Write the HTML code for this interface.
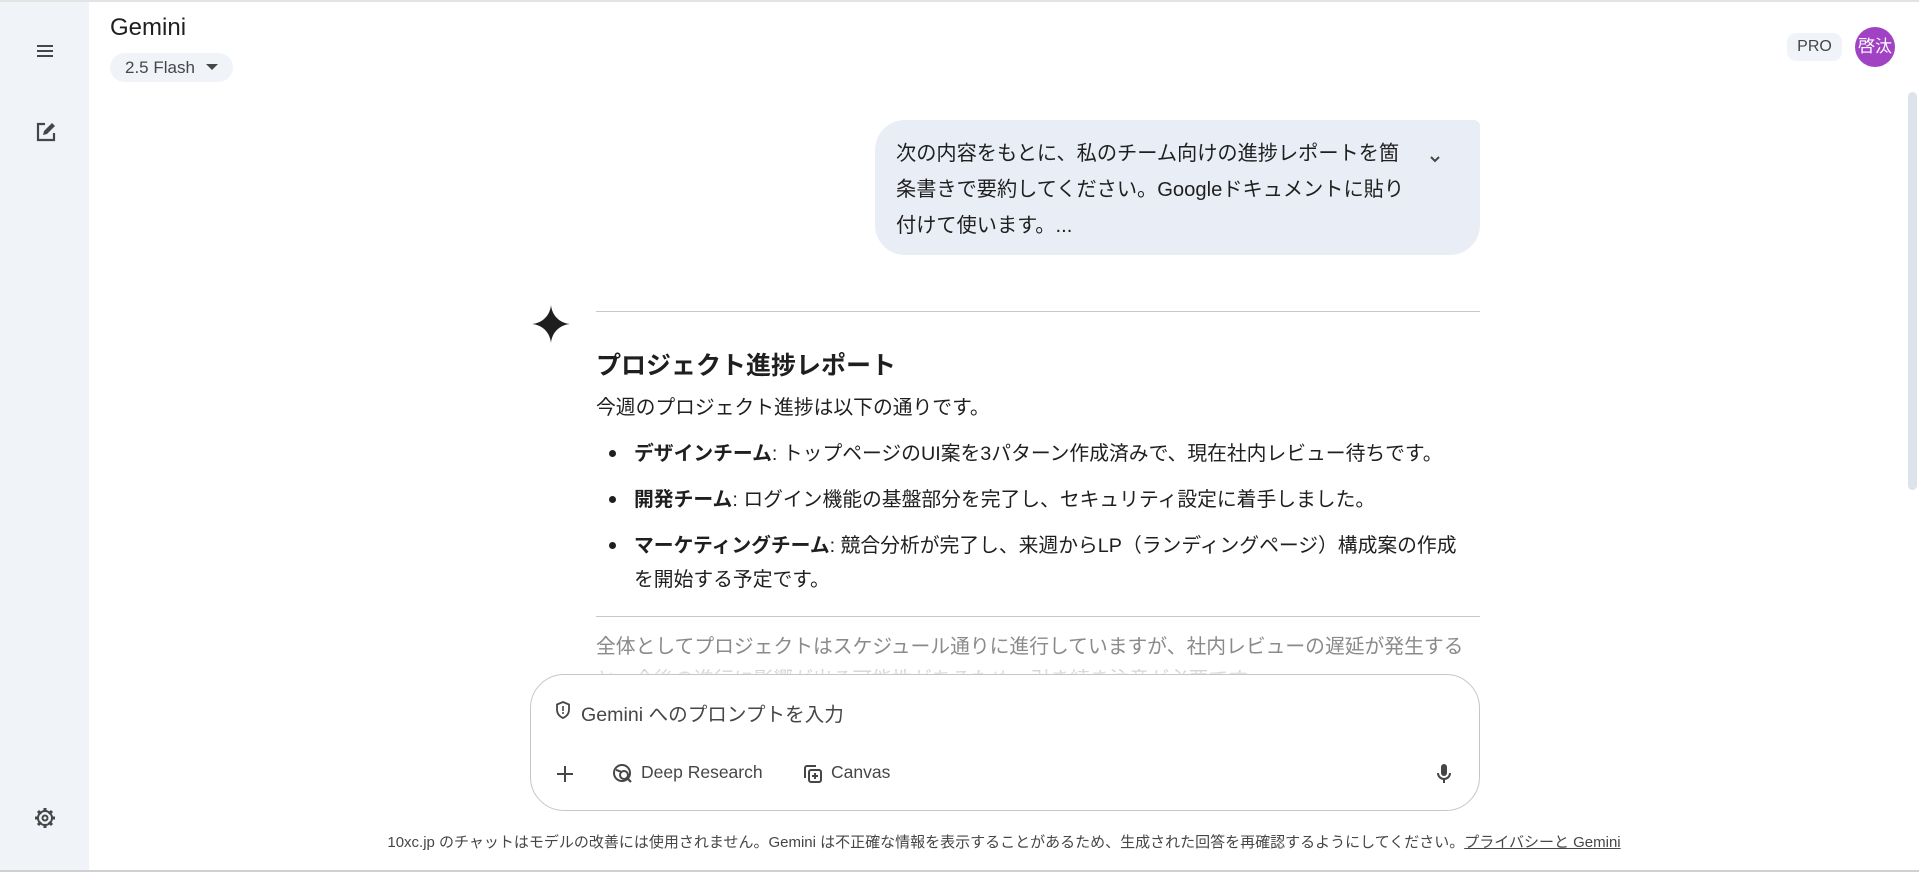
<!DOCTYPE html>
<html><head><meta charset="utf-8">
<style>
*{margin:0;padding:0;box-sizing:border-box}
html,body{width:1919px;height:872px;overflow:hidden;background:#fff;font-family:"Liberation Sans","Noto Sans CJK JP",sans-serif;color:#1f1f1f}
.a{position:absolute}
.side{left:0;top:0;width:89px;height:872px;background:#f0f4f9}
.topline{left:0;top:0;width:1919px;height:2px;background:#e3e3e3}
.botline{left:0;top:870px;width:1919px;height:2px;background:#d0d0d0}
.bubble{left:875px;top:120px;width:605px;height:135px;background:#e9eef6;border-radius:30px 6px 30px 30px}
.bt{left:896px;font-size:20.2px;line-height:36px;white-space:nowrap}
.hr{height:1px;background:#c8c8c8}
.body{font-size:19.8px;white-space:nowrap}
.li{left:634px}
.dot{left:609px;width:7px;height:7px;border-radius:50%;background:#1f1f1f}
.input{left:530px;top:674px;width:950px;height:137px;border:1px solid #c4c7c5;border-radius:34px;background:#fff}
.tool{font-size:17.5px;color:#444746;white-space:nowrap}
</style></head><body>
<div class="a side"></div>
<div class="a topline"></div>
<svg class="a" style="left:35px;top:42px" width="20" height="18" viewBox="0 0 20 18"><rect x="2" y="3" width="16" height="2" fill="#444746"/><rect x="2" y="8" width="16" height="2" fill="#444746"/><rect x="2" y="13" width="16" height="2" fill="#444746"/></svg>
<svg class="a" style="left:34px;top:120px" width="24" height="24" viewBox="0 0 24 24"><path d="M11 4H4v16h16v-7" fill="none" stroke="#444746" stroke-width="2.2"/><path d="M9 15l1-4 8-8 3 3-8 8z" fill="#444746"/></svg>
<svg class="a" style="left:33px;top:806px" width="24" height="24" viewBox="0 0 24 24"><circle cx="12" cy="12" r="7" fill="none" stroke="#444746" stroke-width="2"/><circle cx="12" cy="12" r="2.5" fill="none" stroke="#444746" stroke-width="2"/><g stroke="#444746" stroke-width="3"><path d="M12 2v4M12 18v4M2 12h4M18 12h4M5 5l3 3M16 16l3 3M5 19l3-3M16 8l3-3"/></g></svg>

<div class="a" style="left:110px;top:14px;font-size:24px">Gemini</div>
<div class="a" style="left:110px;top:53px;width:123px;height:29px;border-radius:15px;background:#f0f4f9;font-size:17px;color:#444746;padding:5px 0 0 15px">2.5 Flash <span style="display:inline-block;width:0;height:0;border-left:6px solid transparent;border-right:6px solid transparent;border-top:6px solid #444746;margin-left:6px;vertical-align:3px"></span></div>

<div class="a" style="left:1787px;top:33px;width:55px;height:28px;border-radius:9px;background:#f0f4f9;font-size:16px;color:#444746;text-align:center;line-height:28px">PRO</div>
<div class="a" style="left:1855px;top:27px;width:40px;height:40px;border-radius:50%;background:#a142c4;color:#fff;font-size:17px;text-align:center;line-height:40px">啓汰</div>
<div class="a" style="left:1908px;top:92px;width:9px;height:398px;border-radius:5px;background:#dde3ea"></div>

<div class="a bubble"></div>
<div class="a bt" style="top:136px">次の内容をもとに、私のチーム向けの進捗レポートを箇</div>
<div class="a bt" style="top:172px">条書きで要約してください。Googleドキュメントに貼り</div>
<div class="a bt" style="top:208px">付けて使います。...</div>
<svg class="a" style="left:1427px;top:151px" width="16" height="16" viewBox="0 0 16 16"><path d="M4 6l4 4 4-4" fill="none" stroke="#444746" stroke-width="2"/></svg>

<svg class="a" style="left:532px;top:305px" width="38" height="38" viewBox="0 0 40 40"><path d="M20 0C21 11 29 19 40 20C29 21 21 29 20 40C19 29 11 21 0 20C11 19 19 11 20 0Z" fill="#1f1f1f"/></svg>
<div class="a hr" style="left:596px;top:311px;width:884px"></div>
<div class="a" style="left:596px;top:346px;font-size:25px;font-weight:bold;white-space:nowrap">プロジェクト進捗レポート</div>
<div class="a body" style="left:596px;top:391px">今週のプロジェクト進捗は以下の通りです。</div>
<div class="a dot" style="top:450px"></div>
<div class="a body li" style="top:437px"><b>デザインチーム</b>: トップページのUI案を3パターン作成済みで、現在社内レビュー待ちです。</div>
<div class="a dot" style="top:496px"></div>
<div class="a body li" style="top:483px"><b>開発チーム</b>: ログイン機能の基盤部分を完了し、セキュリティ設定に着手しました。</div>
<div class="a dot" style="top:542px"></div>
<div class="a body li" style="top:529px"><b>マーケティングチーム</b>: 競合分析が完了し、来週からLP（ランディングページ）構成案の作成</div>
<div class="a body li" style="top:563px">を開始する予定です。</div>
<div class="a hr" style="left:596px;top:616px;width:884px"></div>
<div class="a body" style="left:596px;top:630px;color:#8a8a8a">全体としてプロジェクトはスケジュール通りに進行していますが、社内レビューの遅延が発生する</div>
<div class="a body" style="left:596px;top:663px;color:#c8c8c8">と、今後の進行に影響が出る可能性があるため、引き続き注意が必要です。</div>
<div class="a" style="left:89px;top:668px;width:1811px;height:12px;background:linear-gradient(rgba(255,255,255,0),#fff)"></div>
<div class="a" style="left:89px;top:680px;width:1818px;height:190px;background:#fff"></div>

<div class="a input"></div>
<svg class="a" style="left:554px;top:700px" width="18" height="20" viewBox="0 0 18 20"><path d="M9 2l6 2.5v5c0 4-2.6 7-6 8.5C5.6 16.5 3 13.5 3 9.5v-5z" fill="none" stroke="#444746" stroke-width="1.8"/><rect x="8.2" y="6" width="1.6" height="5" fill="#444746"/><circle cx="9" cy="13" r="1" fill="#444746"/></svg>
<div class="a" style="left:581px;top:698px;font-size:19.6px;color:#444746;white-space:nowrap">Gemini へのプロンプトを入力</div>
<svg class="a" style="left:555px;top:764px" width="20" height="20" viewBox="0 0 20 20"><path d="M10 2v16M2 10h16" stroke="#444746" stroke-width="2"/></svg>
<svg class="a" style="left:612px;top:763px" width="22" height="22" viewBox="0 0 22 22"><circle cx="10" cy="10" r="8" fill="none" stroke="#444746" stroke-width="2"/><circle cx="12" cy="12" r="4" fill="#fff" stroke="#444746" stroke-width="2"/><path d="M15 15l4 4" stroke="#444746" stroke-width="2.2"/><path d="M4 7c2 0 3 2 5 1" stroke="#444746" stroke-width="2" fill="none"/></svg>
<div class="a tool" style="left:641px;top:762px">Deep Research</div>
<svg class="a" style="left:802px;top:763px" width="22" height="22" viewBox="0 0 22 22"><path d="M3 15V5a2 2 0 0 1 2-2h9" fill="none" stroke="#444746" stroke-width="2"/><rect x="7" y="7" width="12" height="12" rx="2" fill="none" stroke="#444746" stroke-width="2"/><path d="M13 10v6M10 13h6" stroke="#444746" stroke-width="2"/></svg>
<div class="a tool" style="left:831px;top:762px">Canvas</div>
<svg class="a" style="left:1434px;top:762px" width="20" height="24" viewBox="0 0 20 24"><rect x="7" y="2" width="6" height="12" rx="3" fill="#444746"/><path d="M4 11a6 6 0 0 0 12 0" fill="none" stroke="#444746" stroke-width="2"/><rect x="9" y="17" width="2" height="4" fill="#444746"/></svg>

<div class="a" style="left:0;top:831px;width:2008px;text-align:center;font-size:15px;color:#444746;white-space:nowrap">10xc.jp のチャットはモデルの改善には使用されません。Gemini は不正確な情報を表示することがあるため、生成された回答を再確認するようにしてください。<span style="text-decoration:underline">プライバシーと Gemini</span></div>
<div class="a botline"></div>
</body></html>
